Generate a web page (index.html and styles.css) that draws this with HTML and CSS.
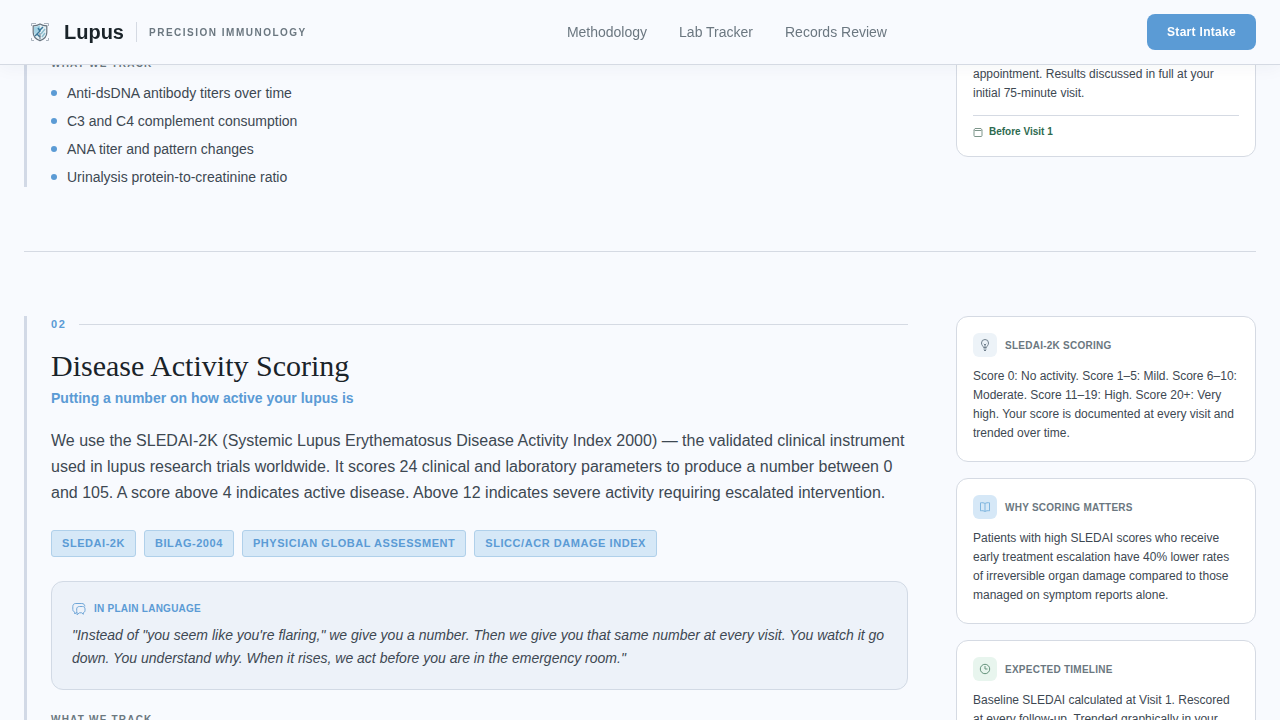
FILE: index.html
```
<!DOCTYPE html>
<html lang="en">
  <head>
    <meta charset="UTF-8" />
    <meta name="viewport" content="width=device-width, initial-scale=1.0" />
    <title>Lupus</title>
    <link rel="stylesheet" href="styles.css">
  </head>
  <body>
    <header class="site-header">
      <div class="brand">
        <svg class="brand-logo" viewBox="0 0 32 32" fill="none">
          <path d="M7.500 10V7.500H12M20 7.500h4.500V10M7.500 22v2.500H10M22 24.500h2.500V22" stroke="#aab3bd" stroke-width="1" />
          <path d="M16 8c2.300 1.400 4.600 1.800 6.800 1.800v6.700c0 4-2.800 6.800-6.800 8.300-4-1.500-6.800-4.300-6.800-8.300V9.800C11.400 9.800 13.700 9.400 16 8z" fill="#e4f1f6" stroke="#68737e" stroke-width="1.200" />
          <path d="M10 10.800c2.500 0 4.500-.6 6-1.500V14l-5.500 4.500c-.5-2-.5-5-.5-7.700z" fill="#a4d3e5" />
          <path d="M16 14l3-3M14 17l-3 3M14 12l2 3-3 3 3 3" stroke="#39779a" stroke-width="1.500" />
          <path d="M16 17v6.500" stroke="#68737e" stroke-width="1" />
          <path d="M17 18l4-5M18 21l3-4" stroke="#8cbccd" stroke-width="1.500" />
        </svg>
        <span class="brand-name">Lupus</span>
        <span class="brand-divider"></span>
        <span class="brand-tag">PRECISION IMMUNOLOGY</span>
      </div>
      <nav class="site-nav">
        <a href="#methodology">Methodology</a>
        <a href="#labs">Lab Tracker</a>
        <a href="#records">Records Review</a>
      </nav>
      <button class="cta" type="button">Start Intake</button>
    </header>

    <main class="page" id="methodology">
      <section class="step">
        <article class="step-body">
          <div class="track">
            <h3 class="track-title">WHAT WE TRACK</h3>
            <ul class="track-list">
              <li>Anti-dsDNA antibody titers over time</li>
              <li>C3 and C4 complement consumption</li>
              <li>ANA titer and pattern changes</li>
              <li>Urinalysis protein-to-creatinine ratio</li>
            </ul>
          </div>
        </article>
        <aside class="cards">
          <div class="card">
            <p class="card-text">appointment. Results discussed in full at your initial 75-minute visit.</p>
            <div class="card-foot">
              <svg width="10" height="10" viewBox="0 0 10 10" fill="none" stroke="#7d958a">
                <rect x="1" y="3.500" width="8" height="6" rx="1" />
                <path d="M.5 3.500L2 1.500h6l1.500 2" />
              </svg>
              <span>Before Visit 1</span>
            </div>
          </div>
        </aside>
      </section>

      <section class="step">
        <article class="step-body">
          <div class="step-number"><span>02</span></div>
          <h2 class="step-title">Disease Activity Scoring</h2>
          <p class="step-subtitle">Putting a number on how active your lupus is</p>
          <p class="step-text">We use the SLEDAI-2K (Systemic Lupus Erythematosus Disease Activity Index 2000) — the validated clinical instrument used in lupus research trials worldwide. It scores 24 clinical and laboratory parameters to produce a number between 0 and 105. A score above 4 indicates active disease. Above 12 indicates severe activity requiring escalated intervention.</p>
          <div class="tags">
            <span class="tag">SLEDAI-2K</span>
            <span class="tag">BILAG-2004</span>
            <span class="tag">PHYSICIAN GLOBAL ASSESSMENT</span>
            <span class="tag">SLICC/ACR DAMAGE INDEX</span>
          </div>
          <div class="plain">
            <div class="plain-label">
              <svg width="14" height="14" viewBox="0 0 14 14" fill="none" stroke="#6fa6d8" stroke-linejoin="round">
                <path d="M5 10.500H4.300L2.800 12v-1.900C1.500 9.700.8 8.800.8 7.500v-3c0-2 1.200-3 3-3h6c1.800 0 3 1 3 3" />
                <path d="M7.500 4.500h3c1.600 0 2.500.9 2.500 2.400v1.500c0 1.300-.7 2-1.700 2.300v1.600l-1.600-1.500H7.500L5 12.700v-2.500c-.3-.5-.3-1-.3-1.800V6.900c0-1.500 1.200-2.400 2.800-2.400z" />
              </svg>
              <span>IN PLAIN LANGUAGE</span>
            </div>
            <p class="plain-quote">"Instead of "you seem like you're flaring," we give you a number. Then we give you that same number at every visit. You watch it go down. You understand why. When it rises, we act before you are in the emergency room."</p>
          </div>
          <div class="track">
            <h3 class="track-title">WHAT WE TRACK</h3>
          </div>
        </article>
        <aside class="cards">
          <div class="card">
            <div class="card-head">
              <span class="card-icon">
                <svg width="12" height="12" viewBox="0 0 12 12" fill="none" stroke="#71808d">
                  <path d="M4.500 8.500C4.500 7.300 2.500 6.500 2.500 4a3.500 3.500 0 0 1 7 0c0 2.500-2 3.300-2 4.500zM4.500 10h3M5 11.500h2M6 8V5.500M4.800 4.800L6 6l1.200-1.200" />
                </svg>
              </span>
              <h3>SLEDAI-2K SCORING</h3>
            </div>
            <p class="card-text">Score 0: No activity. Score 1–5: Mild. Score 6–10: Moderate. Score 11–19: High. Score 20+: Very high. Your score is documented at every visit and trended over time.</p>
          </div>
          <div class="card">
            <div class="card-head">
              <span class="card-icon blue">
                <svg width="12" height="12" viewBox="0 0 12 12" fill="none" stroke="#7eb5df">
                  <path d="M6 2.500C5 1.800 3 1.500 1.500 1.800v8C3 9.500 5 9.800 6 10.500c1-.7 3-1 4.500-.7v-8C9 1.500 7 1.800 6 2.500zM6 2.500v8" />
                </svg>
              </span>
              <h3>WHY SCORING MATTERS</h3>
            </div>
            <p class="card-text">Patients with high SLEDAI scores who receive early treatment escalation have 40% lower rates of irreversible organ damage compared to those managed on symptom reports alone.</p>
          </div>
          <div class="card">
            <div class="card-head">
              <span class="card-icon green">
                <svg width="12" height="12" viewBox="0 0 12 12" fill="none" stroke="#65937c">
                  <circle cx="6" cy="6" r="4.700" />
                  <path d="M6 3v3h2.500" />
                </svg>
              </span>
              <h3>EXPECTED TIMELINE</h3>
            </div>
            <p class="card-text">Baseline SLEDAI calculated at Visit 1. Rescored at every follow-up. Trended graphically in your</p>
          </div>
        </aside>
      </section>
    </main>
  </body>
</html>
```
FILE: styles.css
```
* {
  box-sizing: border-box;
}

body {
  margin: 0;
  background-color: #f8fafe;
  color: #3d4852;
  font-family: "Liberation Sans", Arial, sans-serif;
  font-size: 14px;
}

h2,
h3,
p,
ul {
  margin: 0;
  padding: 0;
}

svg {
  flex-shrink: 0;
}

.site-header {
  position: fixed;
  top: 0;
  left: 0;
  right: 0;
  z-index: 10;
  display: flex;
  align-items: center;
  justify-content: space-between;
  padding: 14px 24px;
  background-color: #f8fafe;
  border-bottom: 1px solid #d5dae3;
  box-shadow: 0 4px 16px rgba(30, 50, 80, 0.04);
}

.brand {
  display: flex;
  align-items: center;
}

.brand-logo {
  width: 32px;
  height: 32px;
  margin-right: 8px;
}

.brand-name {
  color: #1a2329;
  font-size: 20px;
  font-weight: bold;
}

.brand-divider {
  width: 1px;
  height: 20px;
  margin: 0 12px;
  background-color: #d5dae3;
}

.brand-tag {
  color: #6b7780;
  font-size: 10px;
  font-weight: bold;
  line-height: 15px;
  letter-spacing: 0.15em;
}

.site-nav {
  display: flex;
  gap: 32px;
}

.site-nav a {
  color: #6b7780;
  text-decoration: none;
}

.cta {
  height: 36px;
  padding: 0 20px;
  border: none;
  border-radius: 8px;
  background-color: #5b9bd5;
  color: white;
  font-family: inherit;
  font-size: 12px;
  font-weight: bold;
  letter-spacing: 0.025em;
  cursor: pointer;
}

.page {
  padding: 48px 24px 0;
}

.step {
  display: grid;
  grid-template-columns: 1fr 300px;
  gap: 48px;
  align-items: start;
  padding-bottom: 64px;
}

.step + .step {
  padding-top: 64px;
  border-top: 1px solid #d5dae3;
}

.step-body {
  padding-left: 24px;
  border-left: 3px solid #d2d9e6;
}

.step-number {
  display: flex;
  align-items: center;
  gap: 12px;
  margin-bottom: 16px;
  color: #5b9bd5;
  font-size: 11px;
  font-weight: bold;
  line-height: 16px;
  letter-spacing: 0.15em;
}

.step-number::after {
  content: "";
  flex: 1;
  height: 1px;
  background-color: #d5dae3;
}

.step-title {
  color: #1a2329;
  font-family: "Liberation Serif", "Times New Roman", serif;
  font-size: 30px;
  font-weight: normal;
  line-height: 36px;
}

.step-subtitle {
  margin: 4px 0 20px;
  color: #5b9bd5;
  font-weight: bold;
  line-height: 20px;
}

.step-text {
  font-size: 16px;
  line-height: 26px;
}

.tags {
  display: flex;
  flex-wrap: wrap;
  gap: 8px;
  margin: 24px 0;
}

.tag {
  padding: 4px 10px;
  border: 1px solid #b0d0ea;
  border-radius: 3px;
  background-color: #d6e8f7;
  color: #5b9bd5;
  font-size: 11px;
  font-weight: bold;
  line-height: 17px;
  letter-spacing: 0.05em;
}

.plain {
  margin-bottom: 14px;
  padding: 20px 20px 19px;
  border: 1px solid #d2dae5;
  border-radius: 12px;
  background-color: #edf2f9;
}

.plain-label {
  display: flex;
  align-items: center;
  gap: 8px;
  margin-bottom: 8px;
  color: #5b9bd5;
  font-size: 10px;
  font-weight: bold;
  line-height: 14px;
  letter-spacing: 0.025em;
}

.plain-quote {
  font-style: italic;
  line-height: 23px;
}

.track {
  padding-top: 8px;
}

.track-title {
  margin-bottom: 12px;
  color: #6b7780;
  font-size: 10px;
  line-height: 15px;
  letter-spacing: 0.12em;
}

.track-list {
  display: flex;
  flex-direction: column;
  gap: 8px;
  list-style: none;
}

.track-list li {
  display: flex;
  align-items: center;
  gap: 10px;
  line-height: 20px;
}

.track-list li::before {
  content: "";
  width: 6px;
  height: 6px;
  border-radius: 50%;
  background-color: #5b9bd5;
}

.cards {
  display: flex;
  flex-direction: column;
  gap: 16px;
}

.card {
  padding: 16px 16px 18px;
  border: 1px solid #d5dae3;
  border-radius: 12px;
  background-color: white;
}

.card-head {
  display: flex;
  align-items: center;
  gap: 8px;
  margin-bottom: 10px;
}

.card-head h3 {
  color: #6b7780;
  font-size: 10px;
  line-height: 15px;
  letter-spacing: 0.025em;
}

.card-icon {
  display: flex;
  align-items: center;
  justify-content: center;
  width: 24px;
  height: 24px;
  border-radius: 6px;
  background-color: #edf3f8;
}

.card-icon.blue {
  background-color: #d6e8f7;
}

.card-icon.green {
  background-color: #e8f5ee;
}

.card-text {
  font-size: 12px;
  line-height: 19px;
}

.card-foot {
  display: flex;
  align-items: center;
  gap: 6px;
  margin-top: 12px;
  padding-top: 10px;
  border-top: 1px solid #d5dae3;
  color: #2d6a4f;
  font-size: 10px;
  font-weight: bold;
  line-height: 12px;
}
```
